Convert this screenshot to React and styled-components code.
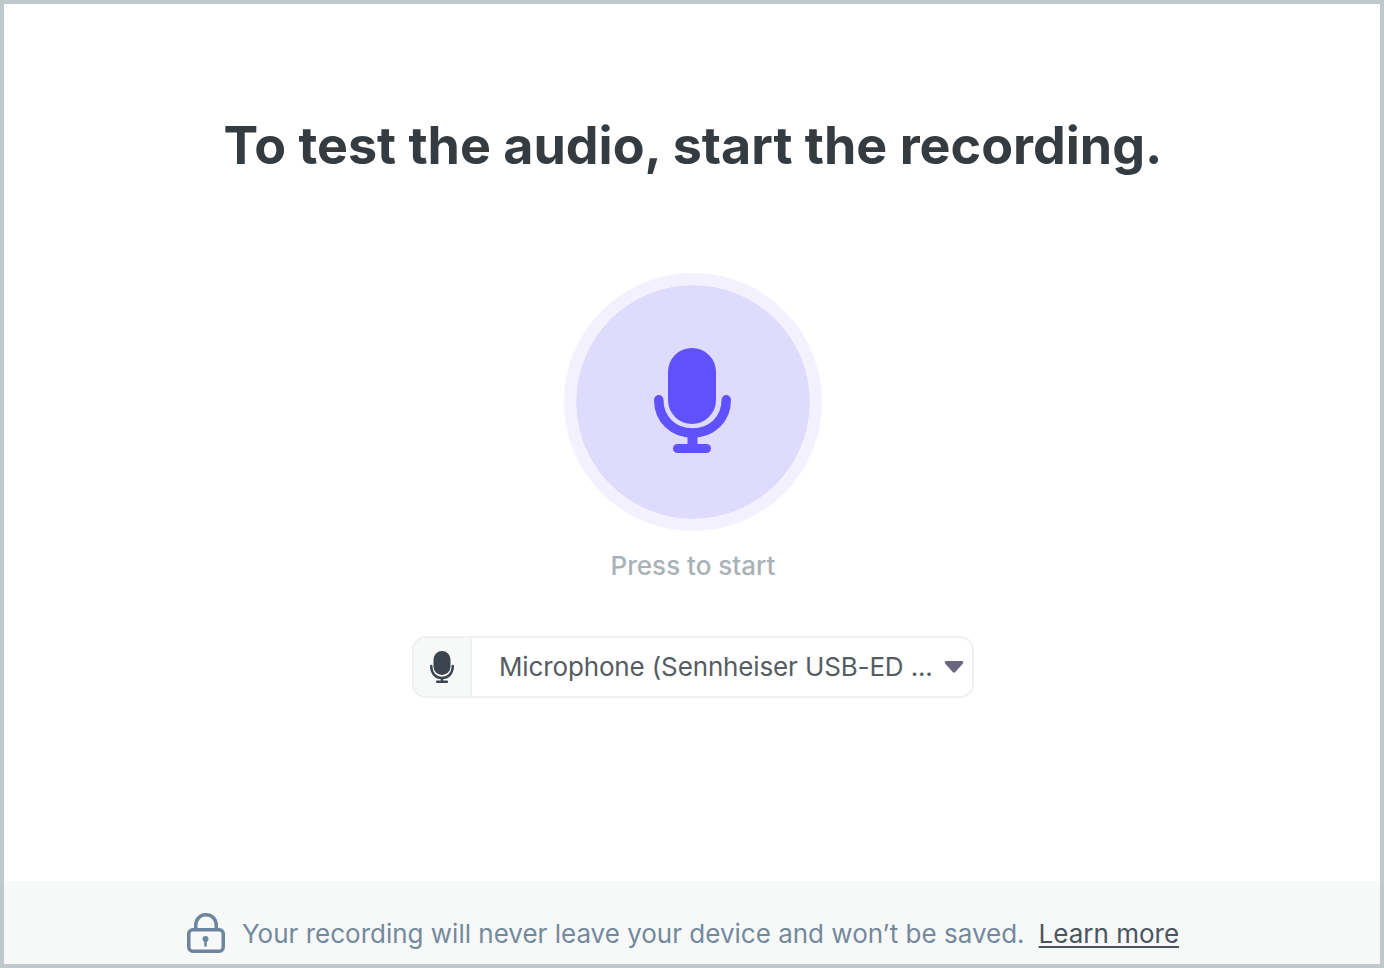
import React from 'react';
import styled, { createGlobalStyle } from 'styled-components';

const GlobalStyle = createGlobalStyle`
  * { box-sizing: border-box; }
  html, body { margin: 0; padding: 0; background: #fff; }
  body { font-family: Inter, "Liberation Sans", sans-serif; }
`;

const Page = styled.div`
  width: 1384px;
  height: 968px;
  border: 4px solid #bfc9cc;
  display: flex;
  flex-direction: column;
  overflow: hidden;
`;

const Main = styled.main`
  flex: 1;
  display: flex;
  flex-direction: column;
  align-items: center;
  padding-top: 112px;
  padding-left: 2px;
`;

const Title = styled.h1`
  margin: 0;
  height: 60px;
  line-height: 60px;
  font-size: 52px;
  font-weight: 700;
  color: #343b41;
  white-space: nowrap;
`;

const RecordButton = styled.button`
  margin-top: 97px;
  width: 258px;
  height: 258px;
  padding: 0;
  border: 12px solid #f4f1fe;
  border-radius: 50%;
  background: #dfdbfd;
  background-clip: padding-box;
  display: flex;
  align-items: center;
  justify-content: center;
  cursor: pointer;
`;

const Hint = styled.div`
  margin-top: 18px;
  height: 34px;
  line-height: 34px;
  font-size: 26px;
  font-weight: 500;
  color: #a9b2b8;
`;

const DeviceSelect = styled.div`
  margin-top: 53px;
  width: 562px;
  height: 62px;
  border: 2px solid #eef0f3;
  border-radius: 14px;
  display: flex;
  overflow: hidden;
`;

const DeviceIcon = styled.div`
  width: 58px;
  flex-shrink: 0;
  background: #f7f9f9;
  border-right: 2px solid #eef0f3;
  display: flex;
  align-items: center;
  justify-content: center;
`;

const DeviceName = styled.div`
  flex: 1;
  padding-left: 27px;
  font-size: 26px;
  letter-spacing: -0.14px;
  line-height: 57px;
  color: #555c63;
  white-space: nowrap;
`;

const Caret = styled.div`
  display: flex;
  align-items: center;
  padding-right: 8px;
`;

const Footer = styled.footer`
  height: 83px;
  background: #f7f9f9;
  display: flex;
  align-items: flex-start;
  justify-content: center;
  padding: 32px 18px 0 0;
  gap: 17px;
`;

const FooterText = styled.div`
  font-size: 26px;
  line-height: 42px;
  color: #74899c;
  white-space: nowrap;
`;

const LearnMore = styled.a`
  margin-left: 14px;
  color: #4a5560;
  text-decoration: underline;
  text-underline-offset: 3px;
`;

const BigMic = () => (
  <svg width="110" height="110" viewBox="0 0 80 110" fill="none">
    <rect x="15" y="1" width="48" height="76" rx="24" fill="#5f52fc" />
    <path d="M5.75 52.75c0 20 15 33.25 33.75 33.25s33.75-13.25 33.75-33.25" stroke="#5f52fc" strokeWidth="9.5" strokeLinecap="round" />
    <path d="M39.5 86v12" stroke="#5f52fc" strokeWidth="10" />
    <rect x="20" y="97" width="38" height="9" rx="4.5" fill="#5f52fc" />
  </svg>
);

const SmallMic = () => (
  <svg width="24" height="32" viewBox="0 0 24 32" fill="none">
    <rect x="3.5" y="0" width="17" height="24" rx="8.5" fill="#3c454d" />
    <path d="M1.25 15c0 7.5 4.5 12 10.75 12s10.75-4.5 10.75-12" stroke="#3c454d" strokeWidth="2.5" strokeLinecap="round" />
    <path d="M12 27v3" stroke="#3c454d" strokeWidth="2.5" />
    <rect x="6" y="29.5" width="12" height="2.5" rx="1" fill="#3c454d" />
  </svg>
);

const LockIcon = () => (
  <svg width="38" height="40" viewBox="0 0 38 40" fill="none">
    <rect x="1.75" y="16.75" width="34.5" height="21.5" rx="4" stroke="#6c86a0" strokeWidth="3.5" />
    <path d="M8.75 16.75v-4.5C8.75 6 13 1.75 19 1.75s10.25 4.25 10.25 10.5v4.5" stroke="#6c86a0" strokeWidth="3.5" />
    <circle cx="18.5" cy="26" r="3" fill="#6c86a0" />
    <path d="M18.5 27v6.5" stroke="#6c86a0" strokeWidth="2.5" />
  </svg>
);

export default function App() {
  return (
    <Page>
      <GlobalStyle />
      <Main>
        <Title>To test the audio, start the recording.</Title>
        <RecordButton aria-label="Start recording">
          <BigMic />
        </RecordButton>
        <Hint>Press to start</Hint>
        <DeviceSelect>
          <DeviceIcon>
            <SmallMic />
          </DeviceIcon>
          <DeviceName>Microphone (Sennheiser USB-ED ...</DeviceName>
          <Caret>
            <svg width="20" height="14" viewBox="0 0 20 14">
              <path d="M2.5 1h15c1.8 0 2.4 1.4 1.2 2.7l-7.4 8.4c-.8.9-1.8.9-2.6 0L1.3 3.7C.1 2.4.7 1 2.5 1z" fill="#6b6580" />
            </svg>
          </Caret>
        </DeviceSelect>
      </Main>
      <Footer>
        <LockIcon />
        <FooterText>
          Your recording will never leave your device and won’t be saved.
          <LearnMore href="#">Learn more</LearnMore>
        </FooterText>
      </Footer>
    </Page>
  );
}
